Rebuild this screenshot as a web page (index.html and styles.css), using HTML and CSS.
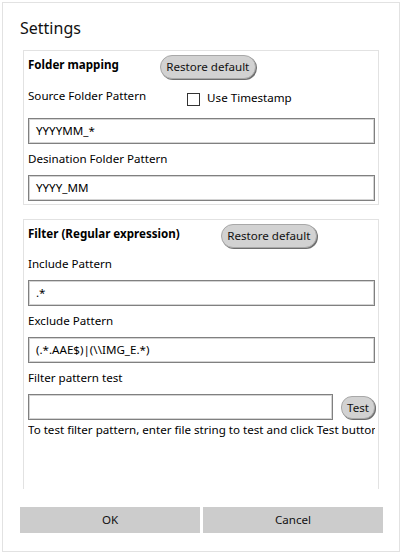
FILE: index.html
```html
<!DOCTYPE html>
<html>
<head>
<meta charset="utf-8">
<link rel="stylesheet" href="styles.css">
</head>
<body>
<div class="dialog">
  <div class="title">Settings</div>
  <div class="scroll">
    <div class="group group-folder">
      <div class="head-row">
        <div class="head-label">Folder mapping</div>
        <div class="pill restore">Restore default</div>
      </div>
      <div class="source-row">
        <div class="label">Source Folder Pattern</div>
        <div class="check-wrap"><span class="checkbox"></span><span class="check-text">Use Timestamp</span></div>
      </div>
      <div class="input first-input">YYYYMM_*</div>
      <div class="label spaced">Desination Folder Pattern</div>
      <div class="input">YYYY_MM</div>
    </div>
    <div class="group group-filter">
      <div class="head-row">
        <div class="head-label">Filter (Regular expression)</div>
        <div class="pill restore">Restore default</div>
      </div>
      <div class="label spaced-small">Include Pattern</div>
      <div class="input">.*</div>
      <div class="label spaced">Exclude Pattern</div>
      <div class="input">(.*.AAE$)|(\\IMG_E.*)</div>
      <div class="label spaced">Filter pattern test</div>
      <div class="test-row">
        <div class="input test-input"></div>
        <div class="pill test">Test</div>
      </div>
      <div class="help">To test filter pattern, enter file string to test and click Test button</div>
    </div>
  </div>
  <div class="actions">
    <div class="btn ok">OK</div>
    <div class="btn cancel">Cancel</div>
  </div>
</div>
</body>
</html>
```
FILE: styles.css
```css
html, body {
  margin: 0;
  padding: 0;
  background: #ffffff;
}
body {
  width: 402px;
  height: 553px;
  overflow: hidden;
  font-family: "Noto Sans", "Open Sans", "DejaVu Sans", sans-serif;
  font-size: 11.6px;
  color: #000;
}
.dialog {
  margin: 2px 0 0 2px;
  width: 398px;
  height: 550px;
  box-sizing: border-box;
  border: 1px solid #e2e2e2;
  display: flex;
  flex-direction: column;
}
.title {
  height: 47px;
  box-sizing: border-box;
  padding: 14px 0 0 17px;
  font-size: 16px;
  line-height: 22px;
  color: #111;
}
.scroll {
  margin-left: 20px;
  width: 356px;
  height: 439px;
  overflow: hidden;
}
.group {
  border: 1px solid #e2e2e2;
  box-sizing: border-box;
  padding: 1px 3px 0 4px;
}
.group-folder {
  height: 155px;
}
.group-filter {
  margin-top: 14px;
  height: 300px;
}
.head-row {
  display: flex;
  align-items: flex-start;
  gap: 41px;
  height: 28px;
}
.head-label {
  font-weight: bold;
  line-height: 20px;
  padding-top: 3px;
}
.pill {
  box-sizing: border-box;
  background: #d2d2d2;
  border: 1px solid #a8a8a8;
  box-shadow: 1px 1px 0 #6f6f6f;
  text-align: center;
  color: #111;
}
.restore {
  margin-top: 3px;
  width: 96px;
  height: 24px;
  line-height: 22px;
  border-radius: 12px;
}
.label {
  line-height: 20px;
}
.source-row {
  display: flex;
  align-items: flex-start;
  gap: 41px;
  margin-top: 6px;
  height: 20px;
}
.check-wrap {
  display: flex;
  align-items: flex-start;
  gap: 7px;
}
.checkbox {
  margin-top: 7px;
  width: 13px;
  height: 13px;
  box-sizing: border-box;
  border: 1px solid #333;
  background: #fff;
}
.check-text {
  line-height: 20px;
  margin-top: 2px;
}
.input {
  box-sizing: border-box;
  height: 26px;
  border: 1px solid #808080;
  box-shadow: inset 0 0 0 1px #d4d4d4;
  padding-left: 7px;
  line-height: 24px;
  background: #fff;
  margin-top: 6px;
}
.first-input {
  margin-top: 12px;
}
.spaced {
  margin-top: 5px;
}
.spaced-small {
  margin-top: 5px;
}
.test-row {
  display: flex;
  align-items: flex-start;
  gap: 8px;
  margin-top: 6px;
}
.test-row .input {
  margin-top: 0;
}
.test-input {
  width: 305px;
}
.test {
  margin-top: 2px;
  width: 34px;
  height: 23px;
  line-height: 21px;
  border-radius: 11px;
}
.help {
  white-space: nowrap;
  overflow: hidden;
  width: 347px;
  line-height: 20px;
}
.actions {
  display: flex;
  gap: 3px;
  margin: 18px 0 0 17px;
}
.btn {
  height: 26px;
  line-height: 26px;
  background: #cccccc;
  text-align: center;
  color: #111;
}
.ok {
  width: 180px;
}
.cancel {
  width: 180px;
}
```
